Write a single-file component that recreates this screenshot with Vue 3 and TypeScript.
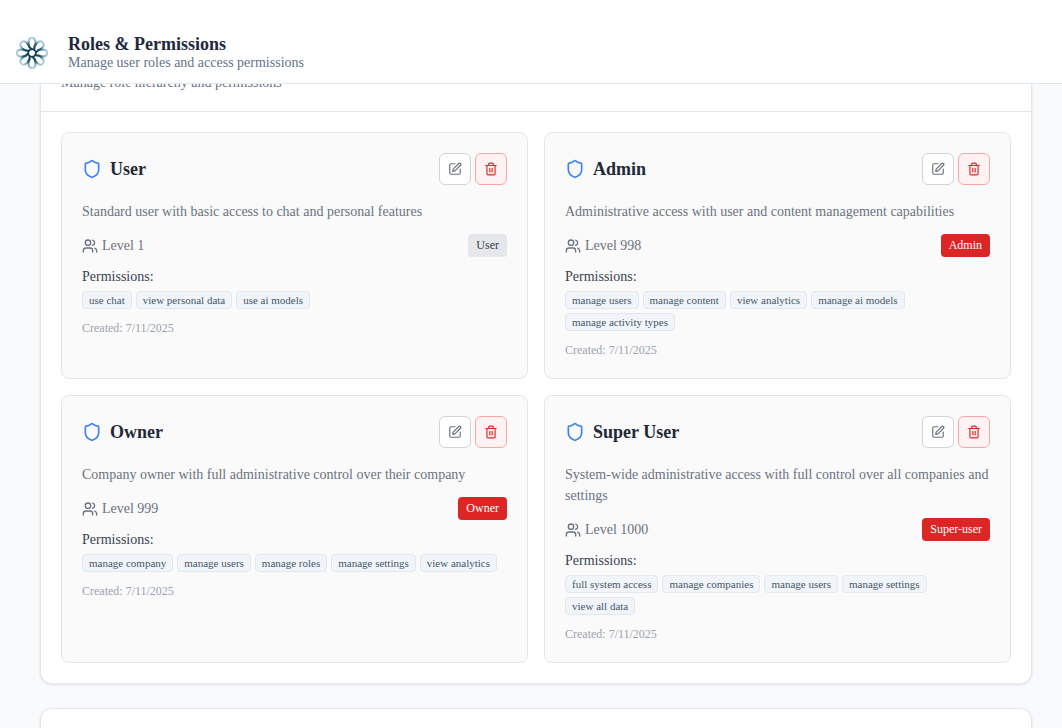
<script setup lang="ts">
interface Role {
  name: string
  description: string
  level: number
  badge: string
  elevated: boolean
  permissions: string[]
  created: string
}

const petals: number[] = [0, 45, 90, 135, 180, 225, 270, 315]

const roles: Role[] = [
  {
    name: 'User',
    description: 'Standard user with basic access to chat and personal features',
    level: 1,
    badge: 'User',
    elevated: false,
    permissions: ['use chat', 'view personal data', 'use ai models'],
    created: '7/11/2025',
  },
  {
    name: 'Admin',
    description: 'Administrative access with user and content management capabilities',
    level: 998,
    badge: 'Admin',
    elevated: true,
    permissions: ['manage users', 'manage content', 'view analytics', 'manage ai models', 'manage activity types'],
    created: '7/11/2025',
  },
  {
    name: 'Owner',
    description: 'Company owner with full administrative control over their company',
    level: 999,
    badge: 'Owner',
    elevated: true,
    permissions: ['manage company', 'manage users', 'manage roles', 'manage settings', 'view analytics'],
    created: '7/11/2025',
  },
  {
    name: 'Super User',
    description: 'System-wide administrative access with full control over all companies and settings',
    level: 1000,
    badge: 'Super-user',
    elevated: true,
    permissions: ['full system access', 'manage companies', 'manage users', 'manage settings', 'view all data'],
    created: '7/11/2025',
  },
]
</script>

<template>
  <div class="page">
    <header class="topbar">
      <svg class="logo" viewBox="0 0 32 32" fill="none" aria-hidden="true">
        <defs>
          <radialGradient id="petal" gradientUnits="userSpaceOnUse" cx="16" cy="16" r="16">
            <stop offset="0.3" stop-color="#123f52" />
            <stop offset="0.6" stop-color="#2f6379" />
            <stop offset="0.78" stop-color="#8ab5c8" />
            <stop offset="1" stop-color="#b4d5e2" />
          </radialGradient>
        </defs>
        <path
          v-for="angle in petals"
          :key="angle"
          :transform="`rotate(${angle} 16 16)`"
          d="M15.500 12.300C13.500 10.500 12.400 8 12.400 5.500C12.600 -0.500 18.800 -0.500 19.500 4.500C19.700 6.500 19.200 8.300 18.300 9.800"
          stroke="url(#petal)"
          stroke-width="1.900"
          stroke-linecap="round"
        />
        <circle cx="16" cy="16" r="3.900" stroke="#123f52" stroke-width="1.700" />
      </svg>
      <div>
        <h1 class="title">Roles &amp; Permissions</h1>
        <p class="subtitle">Manage user roles and access permissions</p>
      </div>
    </header>

    <main class="content">
      <section class="panel">
        <div class="panel-head">
          <p>Manage role hierarchy and permissions</p>
        </div>
        <div class="grid">
          <article v-for="role in roles" :key="role.name" class="card">
            <div class="card-head">
              <svg class="shield" viewBox="0 0 24 24" aria-hidden="true">
                <path d="M20 13c0 5-3.500 7.500-7.660 8.950a1 1 0 0 1-.67-.01C7.500 20.500 4 18 4 13V6a1 1 0 0 1 1-1c2 0 4.500-1.200 6.240-2.720a1.170 1.170 0 0 1 1.520 0C14.510 3.810 17 5 19 5a1 1 0 0 1 1 1z" />
              </svg>
              <h2 class="role-name">{{ role.name }}</h2>
              <div class="actions">
                <button type="button" class="action" :aria-label="`Edit ${role.name}`">
                  <svg viewBox="0 0 24 24" aria-hidden="true">
                    <path d="M12 3H5a2 2 0 0 0-2 2v14a2 2 0 0 0 2 2h14a2 2 0 0 0 2-2v-7" />
                    <path d="M18.375 2.625a1 1 0 0 1 3 3l-9.013 9.014a2 2 0 0 1-.853.505l-2.873.84a.5.5 0 0 1-.62-.62l.84-2.873a2 2 0 0 1 .506-.852z" />
                  </svg>
                </button>
                <button type="button" class="action danger" :aria-label="`Delete ${role.name}`">
                  <svg viewBox="0 0 24 24" aria-hidden="true">
                    <path d="M3 6h18" />
                    <path d="M19 6v14c0 1-1 2-2 2H7c-1 0-2-1-2-2V6" />
                    <path d="M8 6V4c0-1 1-2 2-2h4c1 0 2 1 2 2v2" />
                    <path d="M10 11v6M14 11v6" />
                  </svg>
                </button>
              </div>
            </div>
            <p class="description">{{ role.description }}</p>
            <div class="meta">
              <span class="level">
                <svg viewBox="0 0 24 24" aria-hidden="true">
                  <path d="M16 21v-2a4 4 0 0 0-4-4H6a4 4 0 0 0-4 4v2" />
                  <circle cx="9" cy="7" r="4" />
                  <path d="M22 21v-2a4 4 0 0 0-3-3.870" />
                  <path d="M16 3.130a4 4 0 0 1 0 7.750" />
                </svg>
                Level {{ role.level }}
              </span>
              <span class="badge" :class="{ elevated: role.elevated }">{{ role.badge }}</span>
            </div>
            <h3 class="label">Permissions:</h3>
            <ul class="tags">
              <li v-for="permission in role.permissions" :key="permission" class="tag">{{ permission }}</li>
            </ul>
            <p class="created">Created: {{ role.created }}</p>
          </article>
        </div>
      </section>
      <section class="panel next"></section>
    </main>
  </div>
</template>

<style>
body {
  margin: 0;
  background: #f8fafc;
}
</style>

<style scoped>
* {
  box-sizing: border-box;
}

h1,
h2,
h3,
p,
ul {
  margin: 0;
  padding: 0;
}

svg {
  flex: none;
}

.page {
  min-height: 100vh;
  display: flex;
  flex-direction: column;
  font-family: "Liberation Serif", "Times New Roman", serif;
  font-size: 14px;
  line-height: 21px;
  color: #6b7280;
}

.topbar {
  position: sticky;
  top: 0;
  z-index: 1;
  display: flex;
  align-items: center;
  gap: 20px;
  padding: 34px 16px 11px;
  background: #fff;
  border-bottom: 1px solid #e2e8f0;
}

.logo {
  width: 32px;
  height: 32px;
}

.title {
  font-size: 18px;
  line-height: 20px;
  font-weight: 700;
  color: #1e293b;
}

.subtitle {
  line-height: 18px;
  color: #64748b;
}

.content {
  flex: 1;
  display: flex;
  flex-direction: column;
  gap: 24px;
  margin-top: -35px;
  padding: 0 30px 0 40px;
}

.panel {
  background: #fff;
  border: 1px solid #e5e7eb;
  border-radius: 12px;
  box-shadow: 0 1px 3px rgba(0, 0, 0, 0.1);
}

.panel-head {
  padding: 22px 20px 18px;
  border-bottom: 1px solid #e5e7eb;
}

.grid {
  display: grid;
  grid-template-columns: 1fr 1fr;
  gap: 16px;
  padding: 20px;
}

.card {
  padding: 20px;
  background: #fafafa;
  border: 1px solid #e5e7eb;
  border-radius: 8px;
}

.card-head {
  display: flex;
  align-items: center;
  gap: 8px;
  margin-bottom: 16px;
}

.card svg {
  fill: none;
  stroke: currentColor;
  stroke-width: 2;
  stroke-linecap: round;
  stroke-linejoin: round;
}

.card .shield {
  width: 20px;
  height: 20px;
  color: #3b82f6;
}

.role-name {
  flex: 1;
  font-size: 18px;
  font-weight: 700;
  color: #1f2937;
}

.actions {
  display: flex;
  gap: 4px;
}

.action {
  width: 32px;
  height: 32px;
  display: flex;
  align-items: center;
  justify-content: center;
  padding: 0;
  color: #6b7280;
  background: #fff;
  border: 1px solid #d1d5db;
  border-radius: 6px;
  cursor: pointer;
}

.action svg {
  width: 14px;
  height: 14px;
}

.action.danger {
  color: #dc2626;
  background: #fef2f2;
  border-color: #fca5a5;
}

.description {
  margin-bottom: 12px;
}

.meta {
  display: flex;
  align-items: center;
  justify-content: space-between;
  margin-bottom: 8px;
}

.level {
  display: flex;
  align-items: center;
  gap: 4px;
}

.level svg {
  width: 16px;
  height: 16px;
}

.badge {
  padding: 0 8px;
  font-size: 12px;
  line-height: 23px;
  color: #374151;
  background: #e5e7eb;
  border-radius: 4px;
}

.badge.elevated {
  color: #fff;
  background: #dc2626;
}

.label {
  margin-bottom: 2px;
  font-size: 14px;
  line-height: 24px;
  font-weight: 500;
  color: #374151;
}

.tags {
  display: flex;
  flex-wrap: wrap;
  gap: 4px;
  margin-bottom: 12px;
  list-style: none;
}

.tag {
  padding: 0 6px;
  font-size: 11px;
  line-height: 16px;
  color: #475569;
  background: #f1f5f9;
  border: 1px solid #e2e8f0;
  border-radius: 4px;
}

.created {
  font-size: 12px;
  line-height: 15px;
  color: #9ca3af;
}

.next {
  flex: 1;
  border-bottom: 0;
  border-radius: 12px 12px 0 0;
}
</style>
